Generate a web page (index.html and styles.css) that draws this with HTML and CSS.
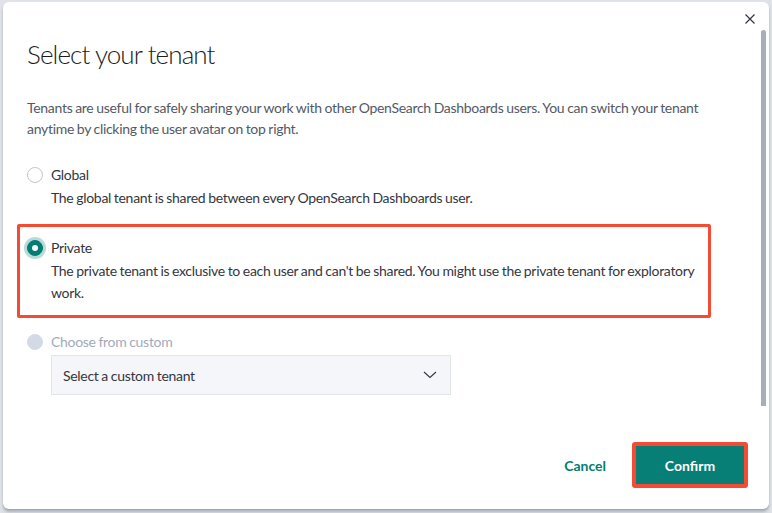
FILE: index.html
```html
<!DOCTYPE html>
<html>
<head>
<meta charset="utf-8">
<link rel="stylesheet" href="styles.css">
</head>
<body>
<div class="modal">
  <button class="close" aria-label="Close">
    <svg width="12" height="12" viewBox="0 0 12 12"><path d="M1.5 1.5 L10.5 10.5 M10.5 1.5 L1.5 10.5" stroke="#343741" stroke-width="1.2" fill="none"/></svg>
  </button>
  <div class="scrollbar"></div>
  <div class="body">
    <h1 class="title">Select your tenant</h1>
    <p class="intro">Tenants are useful for safely sharing your work with other OpenSearch Dashboards users. You can switch your tenant anytime by clicking the user avatar on top right.</p>
    <div class="options">
      <div class="option">
        <div class="row"><span class="radio"></span><span class="label">Global</span></div>
        <div class="desc">The global tenant is shared between every OpenSearch Dashboards user.</div>
      </div>
      <div class="option highlight">
        <div class="row"><span class="radio checked"></span><span class="label">Private</span></div>
        <div class="desc">The private tenant is exclusive to each user and can't be shared. You might use the private tenant for exploratory work.</div>
      </div>
      <div class="option">
        <div class="row"><span class="radio disabled"></span><span class="label muted">Choose from custom</span></div>
        <div class="select">
          <span>Select a custom tenant</span>
          <svg width="14" height="8" viewBox="0 0 14 8"><path d="M1 1 L7 6.5 L13 1" stroke="#343741" stroke-width="1.1" fill="none"/></svg>
        </div>
      </div>
    </div>
  </div>
  <div class="footer">
    <button class="cancel">Cancel</button>
    <div class="confirm-wrap"><button class="confirm">Confirm</button></div>
  </div>
</div>
</body>
</html>
```

FILE: styles.css
```css
* { box-sizing: border-box; }
html, body { margin: 0; padding: 0; }
body {
  background: #dfe3e8;
  font-family: "Lato", "Liberation Sans", sans-serif;
  color: #343741;
  width: 772px;
  height: 513px;
  overflow: hidden;
}
.modal {
  position: relative;
  margin: 2px 3px 0 3px;
  height: 507px;
  background: #ffffff;
  border-radius: 6px;
  box-shadow: 0 1px 1px rgba(0,0,0,0.08), 0 3px 3px rgba(80,90,110,0.35);
  display: flex;
  flex-direction: column;
}
.close {
  position: absolute;
  top: 9px;
  right: 11px;
  width: 16px;
  height: 16px;
  padding: 2px;
  border: 0;
  background: none;
  display: flex;
  align-items: center;
  justify-content: center;
}
.scrollbar {
  position: absolute;
  top: 28px;
  right: 3px;
  width: 5px;
  height: 376px;
  background: #a8aeb5;
  border-radius: 3px 3px 0 0;
}
.body {
  flex: 1;
  padding: 36px 24px 0 24px;
}
.title {
  margin: 0;
  font-size: 26px;
  line-height: 32px;
  font-weight: 300;
  color: #1a1c21;
  letter-spacing: -0.9px;
}
.intro, .desc, .label, .select {
  letter-spacing: -0.3px;
  word-spacing: -0.5px;
}
.intro {
  margin: 27px 0 0 0;
  font-size: 14px;
  line-height: 21px;
  color: #535966;
  width: 712px;
}
.options {
  margin-top: 26px;
  display: flex;
  flex-direction: column;
  gap: 14px;
}
.option.highlight {
  margin: 1px -3px 0 -10px;
  width: 694px;
  border: 3px solid #f34b34;
  border-radius: 2px;
  padding: 11px 8px 11px 7px;
}
.row {
  display: flex;
  align-items: center;
  gap: 8px;
  height: 20px;
}
.radio {
  width: 16px;
  height: 16px;
  border-radius: 50%;
  border: 1px solid #c2c5ca;
  background: #fff;
  flex: none;
  position: relative;
}
.radio.checked {
  background: #017d73;
  border-color: #017d73;
  box-shadow: 0 0 0 3px rgba(1,125,115,0.28);
}
.radio.checked::after {
  content: "";
  position: absolute;
  left: 4px;
  top: 4px;
  width: 6px;
  height: 6px;
  border-radius: 50%;
  background: #fff;
}
.radio.disabled {
  background: #d3dae6;
  border-color: #d3dae6;
}
.label {
  font-size: 14px;
  line-height: 20px;
}
.label.muted { color: #a2abba; }
.desc {
  margin-top: 2px;
  padding-left: 24px;
  font-size: 14px;
  line-height: 22px;
  color: #343741;
}
.select {
  margin: 3px 0 0 24px;
  width: 400px;
  height: 40px;
  background: #f4f6f9;
  border: 1px solid #e1e4e9;
  display: flex;
  align-items: center;
  justify-content: space-between;
  padding: 0 13px 0 11px;
  font-size: 14px;
  color: #343741;
}
.footer {
  display: flex;
  justify-content: flex-end;
  align-items: center;
  gap: 22px;
  padding: 0 21px 21px 24px;
}
.cancel {
  border: 0;
  background: none;
  font-family: inherit;
  font-size: 14px;
  font-weight: 700;
  color: #017d73;
  padding: 0 4px;
}
.confirm-wrap {
  border: 4px solid #f34b34;
  border-radius: 3px;
}
.confirm {
  display: block;
  width: 108px;
  height: 38px;
  border: 0;
  background: #077e76;
  color: #fff;
  font-family: inherit;
  font-size: 14px;
  font-weight: 700;
}
```
